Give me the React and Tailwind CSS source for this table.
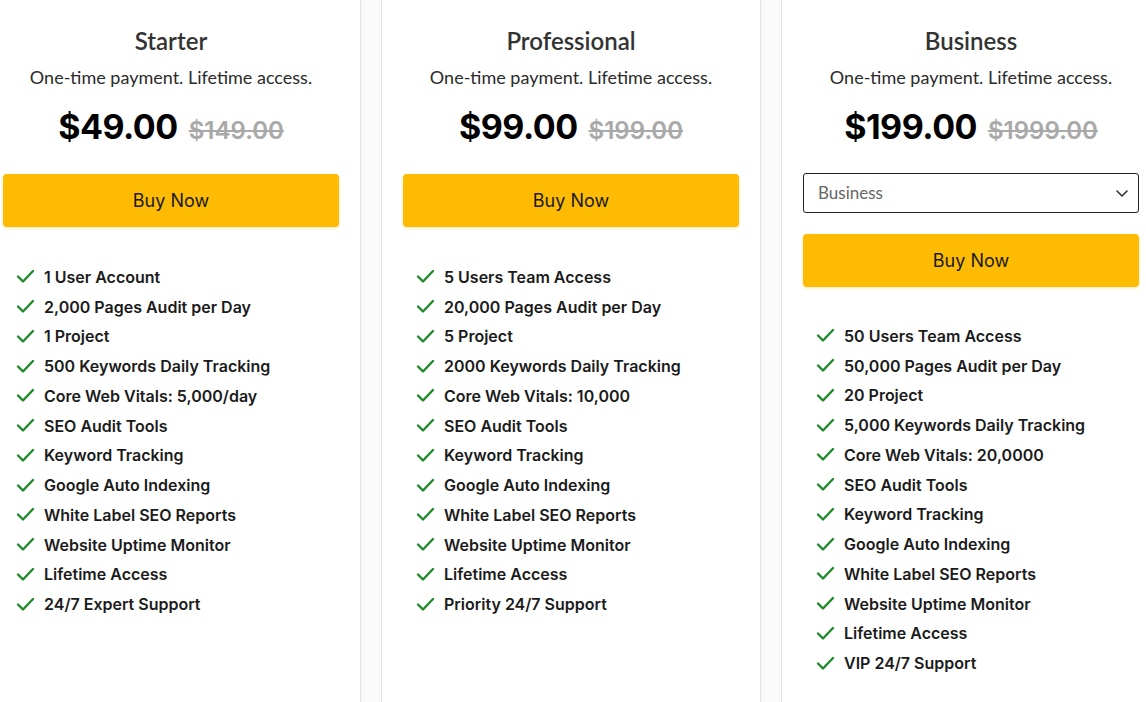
import React from "react";

const plans = [
  {
    name: "Starter",
    price: "$49.00",
    oldPrice: "$149.00",
    features: [
      "1 User Account",
      "2,000 Pages Audit per Day",
      "1 Project",
      "500 Keywords Daily Tracking",
      "Core Web Vitals: 5,000/day",
      "SEO Audit Tools",
      "Keyword Tracking",
      "Google Auto Indexing",
      "White Label SEO Reports",
      "Website Uptime Monitor",
      "Lifetime Access",
      "24/7 Expert Support",
    ],
  },
  {
    name: "Professional",
    price: "$99.00",
    oldPrice: "$199.00",
    features: [
      "5 Users Team Access",
      "20,000 Pages Audit per Day",
      "5 Project",
      "2000 Keywords Daily Tracking",
      "Core Web Vitals: 10,000",
      "SEO Audit Tools",
      "Keyword Tracking",
      "Google Auto Indexing",
      "White Label SEO Reports",
      "Website Uptime Monitor",
      "Lifetime Access",
      "Priority 24/7 Support",
    ],
  },
  {
    name: "Business",
    price: "$199.00",
    oldPrice: "$1999.00",
    select: true,
    features: [
      "50 Users Team Access",
      "50,000 Pages Audit per Day",
      "20 Project",
      "5,000 Keywords Daily Tracking",
      "Core Web Vitals: 20,0000",
      "SEO Audit Tools",
      "Keyword Tracking",
      "Google Auto Indexing",
      "White Label SEO Reports",
      "Website Uptime Monitor",
      "Lifetime Access",
      "VIP 24/7 Support",
    ],
  },
];

function Check() {
  return (
    <svg width="19" height="15" viewBox="0 0 19 15" fill="none" className="shrink-0">
      <path d="M2 7.5l5 5L17 2" stroke="#1f8a2a" strokeWidth="2.4" strokeLinecap="round" strokeLinejoin="round" />
    </svg>
  );
}

function PlanCard({ plan }) {
  return (
    <div className="w-[380px] shrink-0 bg-white border border-[#e4e4e4] px-[21px] pt-[26px] pb-10 min-h-[720px] -mt-[10px] shadow-[0_0_6px_rgba(0,0,0,0.04)]">
      <div className="mt-[9px] text-center font-['Lato',sans-serif]">
        <h2 className="text-[24px] leading-[30px] font-semibold text-[#333]">{plan.name}</h2>
        <p className="mt-[9px] text-[18px] leading-[24px] text-[#2b2b2b]">One-time payment. Lifetime access.</p>
      </div>
      <div className="mt-[16px] flex items-baseline justify-center gap-[11px] font-['Inter',sans-serif]">
        <span className="text-[34px] leading-[44px] font-bold text-black tracking-[-0.5px]">{plan.price}</span>
        <span className="text-[24px] leading-[44px] font-semibold text-[#a9a9a9] line-through">{plan.oldPrice}</span>
      </div>
      {plan.select && (
        <div className="mt-[20px] h-[40px] flex items-center justify-between border border-[#222] rounded-[3px] pl-[14px] pr-[8px] font-['Lato',sans-serif] text-[17px] text-[#666]">
          <span>Business</span>
          <svg width="16" height="16" viewBox="0 0 16 16" fill="none">
            <path d="M3 6l5 5 5-5" stroke="#333" strokeWidth="1.6" strokeLinecap="round" strokeLinejoin="round" />
          </svg>
        </div>
      )}
      <button
        className={`${plan.select ? "mt-[21px]" : "mt-[21px]"} w-full h-[53px] rounded-[4px] bg-[#fdbb04] text-[18px] text-[#1a1a1a] font-['Inter',sans-serif] shadow-[0_1px_3px_rgba(253,187,4,0.35)]`}
      >
        Buy Now
      </button>
      <ul className={`${plan.select ? "mt-[34px]" : "mt-[35px]"} pl-[13px] font-['Inter',sans-serif]`}>
        {plan.features.map((f) => (
          <li key={f} className="h-[29.75px] flex items-center gap-[9px] text-[16px] font-semibold text-[#1b1b1b]">
            <Check />
            <span>{f}</span>
          </li>
        ))}
      </ul>
    </div>
  );
}

export default function App() {
  return (
    <div className="w-[1146px] h-[702px] overflow-hidden bg-[#fbfbfb]">
      <div className="flex gap-[20px] -ml-[19px]">
        {plans.map((p) => (
          <PlanCard key={p.name} plan={p} />
        ))}
      </div>
    </div>
  );
}
